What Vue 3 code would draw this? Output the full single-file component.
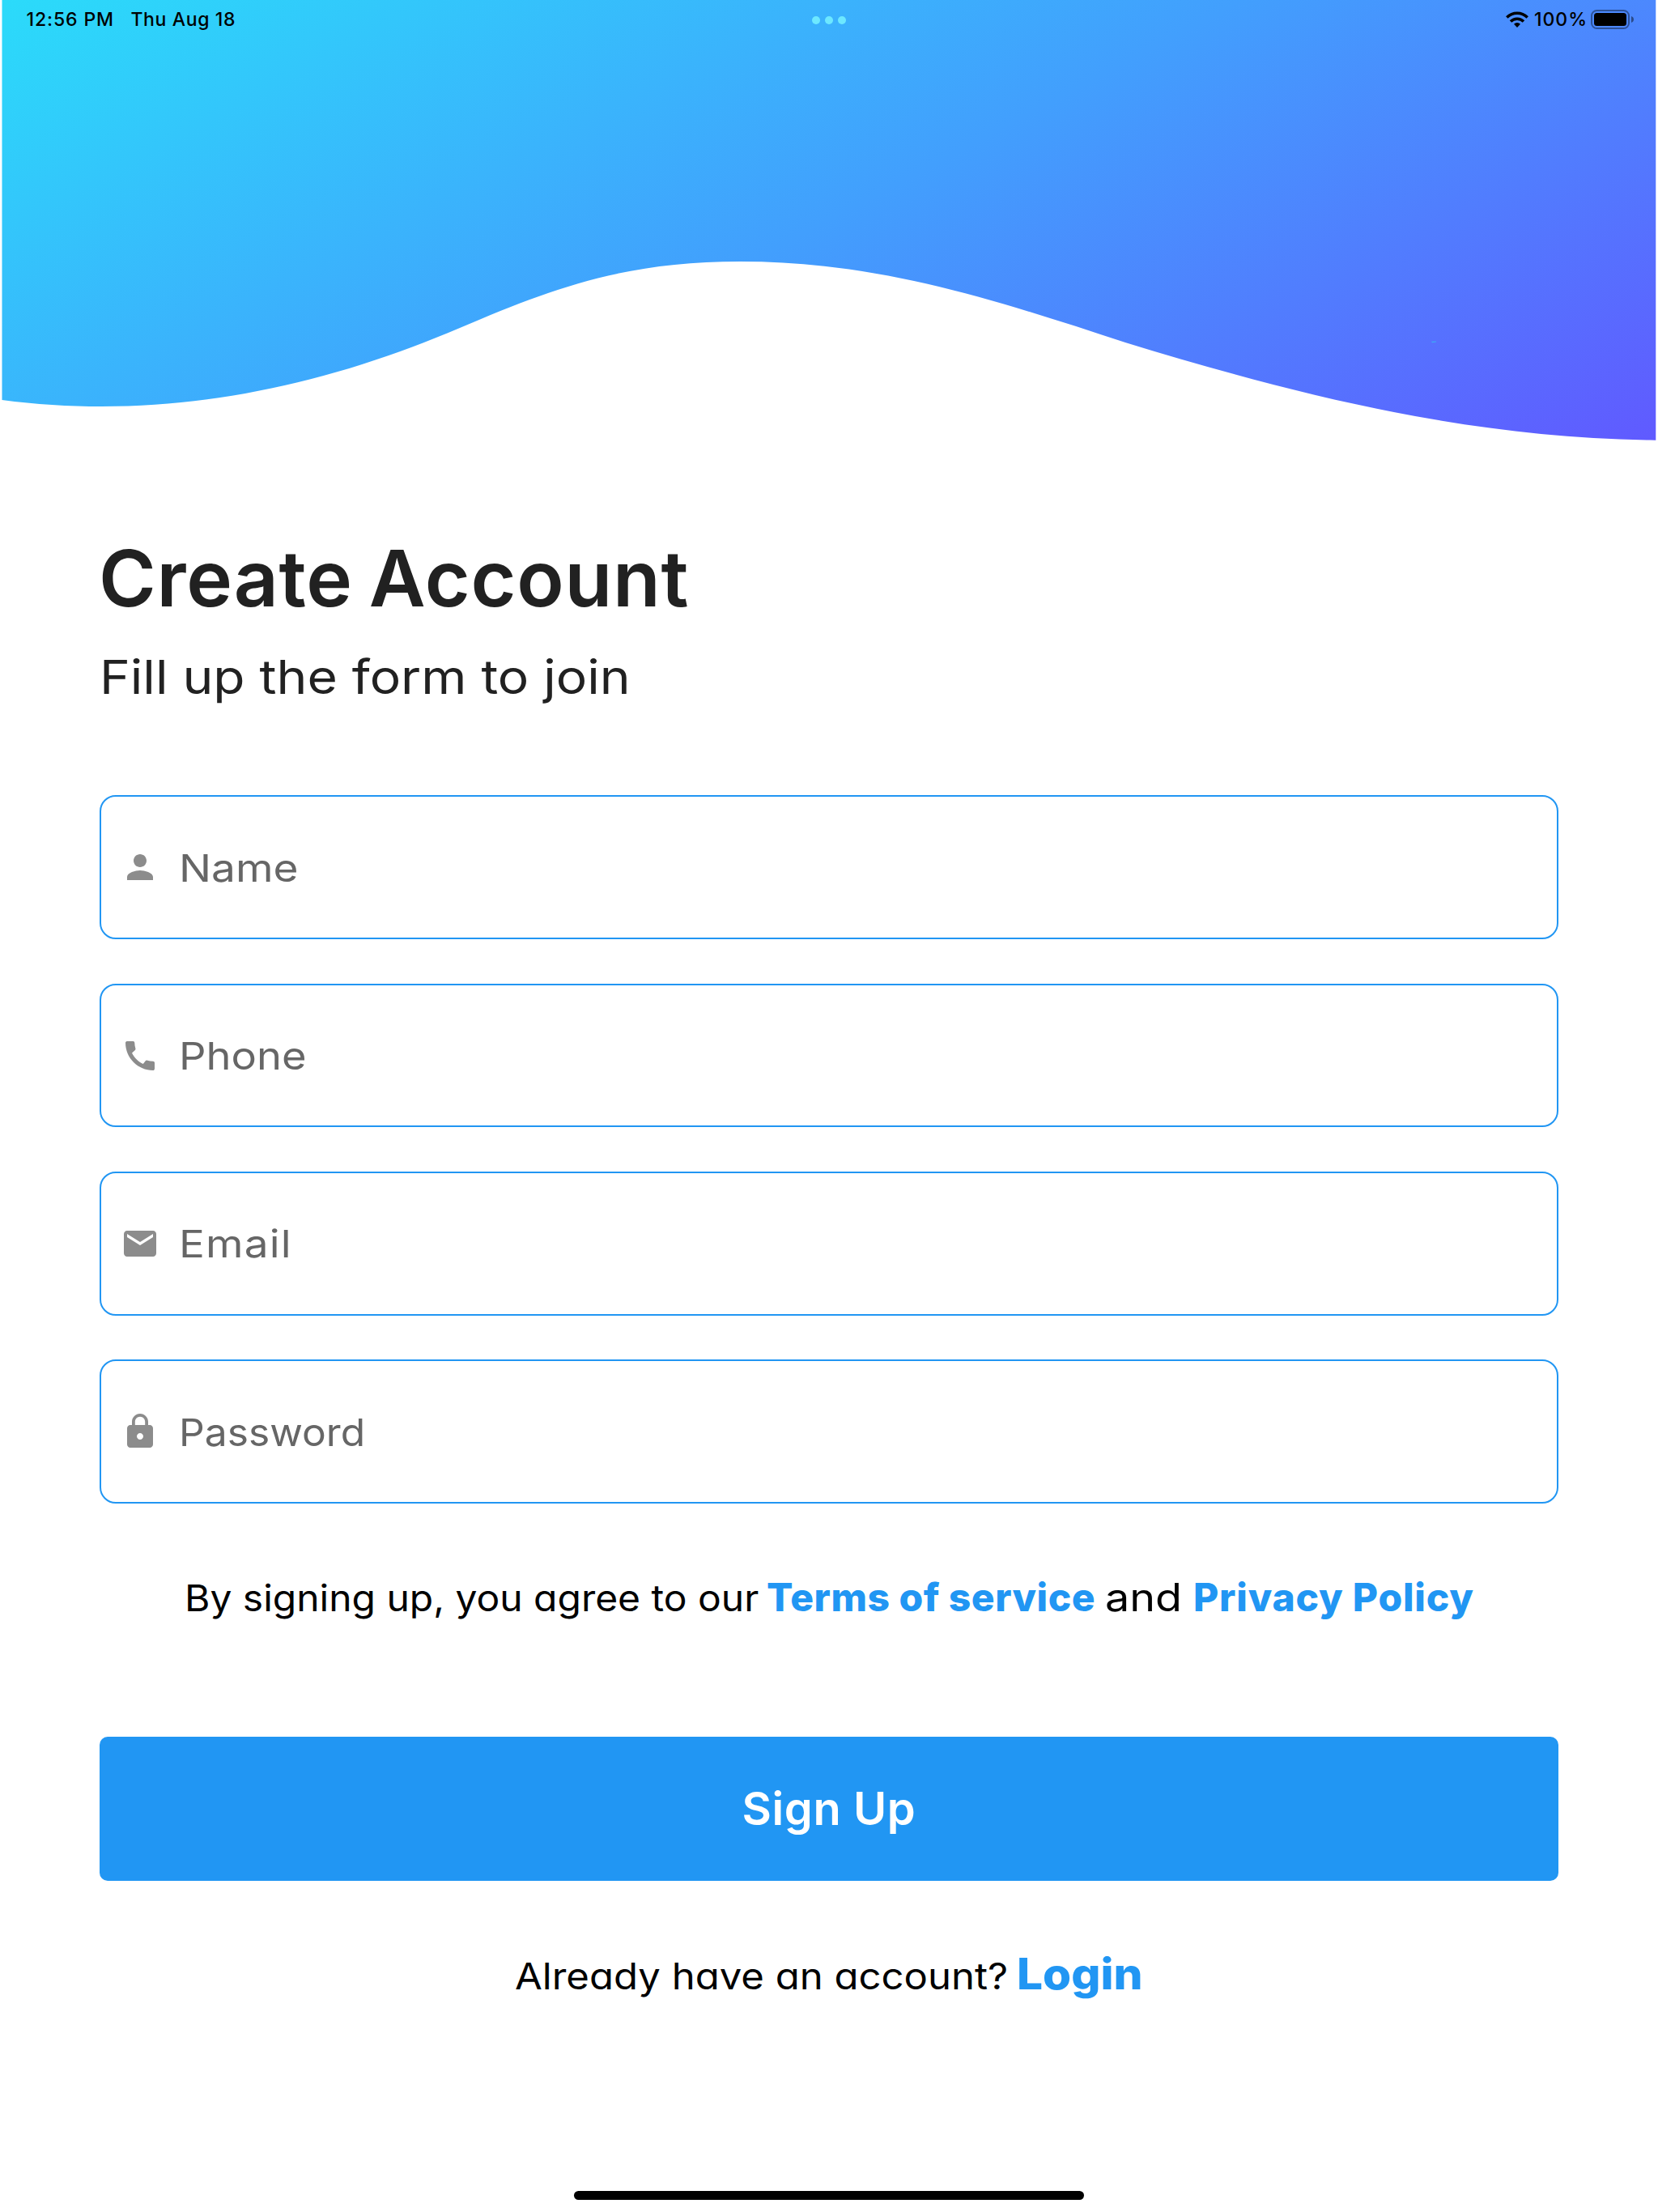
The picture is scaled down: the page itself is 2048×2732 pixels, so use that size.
<script setup>
const fields = [
  {
    key: 'name',
    label: 'Name',
    icon: 'M12 12c2.21 0 4-1.79 4-4s-1.79-4-4-4-4 1.79-4 4 1.79 4 4 4zm0 2c-2.67 0-8 1.34-8 4v2h16v-2c0-2.66-5.33-4-8-4z',
  },
  {
    key: 'phone',
    label: 'Phone',
    icon: 'M20.01 15.38c-1.23 0-2.42-.2-3.53-.56-.35-.12-.74-.03-1.01.24l-1.57 1.97c-2.83-1.35-5.48-3.9-6.89-6.83l1.95-1.66c.27-.28.35-.67.24-1.02-.37-1.11-.56-2.3-.56-3.53 0-.54-.45-.99-.99-.99H4.19C3.65 3 3 3.24 3 3.99 3 13.28 10.73 21 20.01 21c.71 0 .99-.63.99-1.18v-3.45c0-.54-.45-.99-.99-.99z',
  },
  {
    key: 'email',
    label: 'Email',
    icon: 'M20 4H4c-1.1 0-1.99.9-1.99 2L2 18c0 1.1.9 2 2 2h16c1.1 0 2-.9 2-2V6c0-1.1-.9-2-2-2zm0 4l-8 5-8-5V6l8 5 8-5v2z',
  },
  {
    key: 'password',
    label: 'Password',
    icon: 'M18 8h-1V6c0-2.76-2.24-5-5-5S7 3.24 7 6v2H6c-1.1 0-2 .9-2 2v10c0 1.1.9 2 2 2h12c1.1 0 2-.9 2-2V10c0-1.1-.9-2-2-2zm-6 9c-1.1 0-2-.9-2-2s.9-2 2-2 2 .9 2 2-.9 2-2 2zm3.1-9H8.9V6c0-1.71 1.39-3.1 3.1-3.1 1.71 0 3.1 1.39 3.1 3.1v2z',
  },
]
</script>

<template>
  <div class="screen">
    <svg class="wave" viewBox="0 0 2048 546" aria-hidden="true">
      <defs>
        <linearGradient id="sky" gradientUnits="userSpaceOnUse" x1="0" y1="0" x2="676" y2="1272">
          <stop offset="0" stop-color="#2bdbfa" />
          <stop offset="0.5" stop-color="#429ffd" />
          <stop offset="1" stop-color="#605aff" />
        </linearGradient>
      </defs>
      <path
        fill="url(#sky)"
        d="M2.5 0V494C200 520 390 481 568 405C680 357 770 323 914 323C1085 323 1225 369 1390 423C1590 484 1805 541 2045.3 543.7V0Z"
      />
      <path fill="#3fa9f5" d="M1768 421.8l6-.4v1l-5 .8z" />
    </svg>

    <header class="status">
      <span class="time">12:56 PM</span>
      <span class="date">Thu Aug 18</span>
      <span class="dots"><i></i><i></i><i></i></span>
      <svg class="wifi" viewBox="0 0 28 20" aria-hidden="true">
        <g fill="none" stroke="#000" stroke-width="3.5">
          <path d="M1.3 7.6a18 18 0 0 1 25.4 0" />
          <path d="M6 12.5a11.3 11.3 0 0 1 16 0" />
        </g>
        <path d="M14 20l-4-4.2a5.6 5.6 0 0 1 8 0z" />
      </svg>
      <span class="percent">100%</span>
      <svg class="battery" viewBox="0 0 54 24" aria-hidden="true">
        <rect x="1" y="1" width="46" height="22" rx="6.5" fill="none" stroke="#000" stroke-opacity=".4" stroke-width="2" />
        <rect x="4" y="4" width="40" height="16" rx="3.5" />
        <path d="M50 8c4 1.3 4 6.7 0 8z" fill-opacity=".45" />
      </svg>
    </header>

    <main class="content">
      <h1 class="title">Create Account</h1>
      <p class="subtitle">Fill up the form to join</p>

      <form class="form" @submit.prevent>
        <label v-for="f in fields" :key="f.key" class="field" :class="f.key">
          <svg class="icon" viewBox="0 0 24 24" aria-hidden="true"><path :d="f.icon" /></svg>
          <span class="label">{{ f.label }}</span>
        </label>
      </form>

      <p class="row terms">
        <span class="lead">By signing up, you agree to our</span>
        <a class="link tos">Terms of service</a>
        <span class="and">and</span>
        <a class="link privacy">Privacy Policy</a>
      </p>

      <button class="submit" type="button">Sign Up</button>

      <p class="row login">
        <span class="lead">Already have an account?</span>
        <a class="link signin">Login</a>
      </p>
    </main>

    <div class="home"></div>
  </div>
</template>

<style>
body {
  margin: 0;
  background: #fff;
}
</style>

<style scoped>
.screen {
  position: relative;
  display: flex;
  flex-direction: column;
  width: 2048px;
  height: 2732px;
  overflow: hidden;
  background: #fff;
  color: #000;
  font-family: Inter, "Noto Sans", sans-serif;
}
h1,
p {
  margin: 0;
}
.wave {
  display: block;
  flex: none;
  width: 2048px;
  height: 546px;
}

/* Status bar, laid over the wave */
.status {
  position: absolute;
  inset: 0 0 auto 0;
  display: flex;
  align-items: center;
  height: 48px;
  padding: 0 29px 0 32.5px;
  font-size: 23px;
  font-weight: 470;
  line-height: 48px;
  white-space: nowrap;
}
.time {
  letter-spacing: 0.9px;
}
.date {
  margin-left: 20.5px;
  letter-spacing: 0.62px;
}
.dots {
  position: absolute;
  top: 20px;
  left: 1003px;
  display: flex;
  gap: 6px;
}
.dots i {
  width: 10px;
  height: 10px;
  border-radius: 50%;
  background: #6de8ff;
}
.wifi {
  width: 28px;
  height: 20px;
  margin-left: auto;
}
.percent {
  margin-left: 7px;
  letter-spacing: 1px;
}
.battery {
  width: 54px;
  height: 24px;
  margin-left: 4px;
}

.content {
  display: flex;
  flex-direction: column;
  padding: 110px 123px 0;
}
.title {
  margin-left: -1px;
  color: #212121;
  font-size: 96px;
  font-weight: 600;
  line-height: 116px;
  letter-spacing: 0.75px;
  word-spacing: -5px;
}

/* Text set slightly wide: each line is stretched from its left edge */
.subtitle,
.label,
.lead,
.and,
.signin {
  display: inline-block;
  flex: none;
  transform-origin: 0 50%;
}
.subtitle {
  margin-top: 29px;
  color: #212121;
  font-size: 58px;
  line-height: 70px;
  transform: scaleX(1.105);
}

.form {
  display: flex;
  flex-direction: column;
  gap: 54.6px;
  margin-top: 111.3px;
}
.field {
  display: flex;
  align-items: center;
  box-sizing: border-box;
  height: 177.8px;
  padding-left: 24px;
  border: 2px solid #2196f3;
  border-radius: 20px;
  color: #666;
  font-size: 47px;
}
.icon {
  width: 48px;
  height: 48px;
  margin-right: 23.8px;
  fill: #8c8c8c;
}
.name .label {
  transform: scaleX(1.132);
}
.phone .label {
  transform: scaleX(1.116);
}
.email .label {
  letter-spacing: 1px;
  transform: scaleX(1.13);
}
.password .label {
  transform: scaleX(1.058);
}

.row {
  display: flex;
  align-items: baseline;
  white-space: nowrap;
}
.lead {
  font-size: 45px;
  font-feature-settings: "cv11";
}
.link {
  color: #2196f3;
  font-weight: 800;
}
.terms {
  height: 62px;
  margin-top: 85.5px;
  padding-left: 105px;
  font-size: 48px;
  line-height: 60px;
}
.terms .lead {
  width: 719px;
  transform: scaleX(1.066);
}
.tos {
  width: 418px;
  letter-spacing: 0.5px;
}
.and {
  width: 109px;
  transform: scaleX(1.122);
}
.privacy {
  letter-spacing: 0.8px;
}

.submit {
  height: 177.6px;
  margin-top: 140.5px;
  padding: 0;
  border: 0;
  border-radius: 10px;
  background: #2196f3;
  color: #fff;
  font: 600 56px/178px Inter, "Noto Sans", sans-serif;
  letter-spacing: 0.6px;
}

.login {
  margin-top: 82.8px;
  padding-left: 513px;
  line-height: 64px;
}
.login .lead {
  width: 620px;
  transform: scaleX(1.09);
}
.signin {
  font-size: 53px;
  transform: scaleX(1.07);
}

.home {
  position: absolute;
  bottom: 15px;
  left: 709px;
  width: 630px;
  height: 11px;
  border-radius: 6px;
  background: #000;
}
</style>
